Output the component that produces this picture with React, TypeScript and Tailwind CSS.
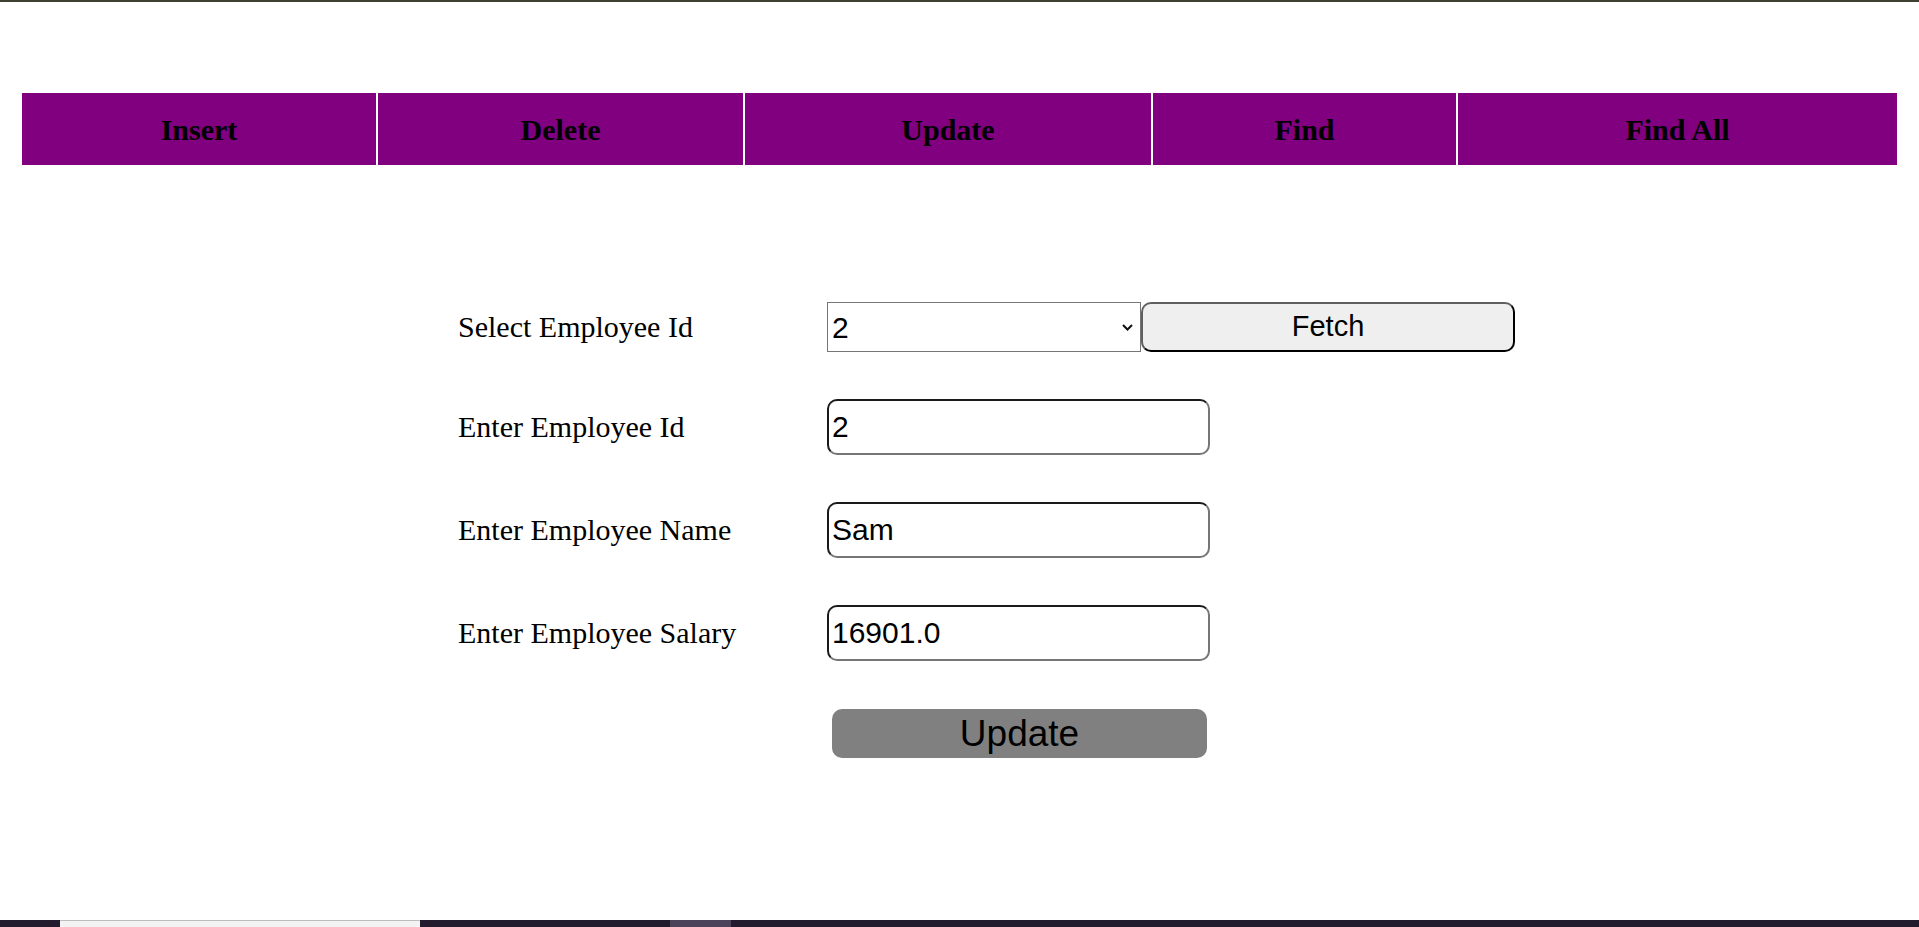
import React from "react";

const tabs = [
  { label: "Insert", width: "w-[354px]" },
  { label: "Delete", width: "w-[365px]" },
  { label: "Update", width: "w-[406px]" },
  { label: "Find", width: "w-[303px]" },
  { label: "Find All", width: "flex-1" },
];

const inputClass =
  "h-[56px] w-[383px] rounded-[10px] border-2 border-t-[#1a1a1a] border-l-[#1a1a1a] border-b-[#767676] border-r-[#767676] bg-white pl-[3px] text-[30px] text-black outline-none [font-family:'Liberation_Sans',Arial,sans-serif]";

function Label({ children }: { children: React.ReactNode }) {
  return (
    <div className="w-[369px] shrink-0 text-[30px] leading-none text-black [font-family:'Liberation_Serif','Times_New_Roman',serif]">
      {children}
    </div>
  );
}

export default function App() {
  return (
    <div className="flex h-screen w-full flex-col bg-white">
      <div className="h-[2px] w-full bg-[#3c4130]" />

      <nav className="mx-[22px] mt-[91px] flex h-[72px] gap-[2px]">
        {tabs.map((t) => (
          <div
            key={t.label}
            className={`${t.width} flex items-center justify-center bg-[#800080] text-[30px] font-bold text-black [font-family:'Liberation_Serif','Times_New_Roman',serif]`}
          >
            {t.label}
          </div>
        ))}
      </nav>

      <form
        className="ml-[458px] mt-[137px] flex flex-col"
        onSubmit={(e) => e.preventDefault()}
      >
        <div className="flex h-[50px] items-center">
          <Label>Select Employee Id</Label>
          <div className="relative h-[50px] w-[314px]">
            <select
              defaultValue="2"
              className="h-full w-full appearance-none border border-[#767676] bg-white pl-[4px] text-[30px] text-black outline-none [font-family:'Liberation_Sans',Arial,sans-serif]"
            >
              <option value="1">1</option>
              <option value="2">2</option>
              <option value="3">3</option>
            </select>
            <svg
              className="pointer-events-none absolute right-[8px] top-[22px]"
              width="11"
              height="7"
              viewBox="0 0 11 7"
            >
              <path
                d="M1 1l4.5 4.5L10 1"
                fill="none"
                stroke="#111"
                strokeWidth="2"
              />
            </svg>
          </div>
          <button
            type="button"
            className="h-[50px] w-[374px] rounded-[10px] border-2 border-t-[#5f5f5f] border-l-[#5f5f5f] border-b-black border-r-black bg-[#efefef] text-[29px] text-black [font-family:'Liberation_Sans',Arial,sans-serif]"
          >
            Fetch
          </button>
        </div>

        <div className="mt-[47px] flex items-center">
          <Label>Enter Employee Id</Label>
          <input className={inputClass} defaultValue="2" />
        </div>

        <div className="mt-[47px] flex items-center">
          <Label>Enter Employee Name</Label>
          <input className={inputClass} defaultValue="Sam" />
        </div>

        <div className="mt-[47px] flex items-center">
          <Label>Enter Employee Salary</Label>
          <input className={inputClass} defaultValue="16901.0" />
        </div>

        <div className="mt-[48px] flex">
          <div className="w-[374px] shrink-0" />
          <button
            type="submit"
            className="h-[49px] w-[375px] rounded-[10px] bg-[#808080] text-[37px] leading-none text-black [font-family:'Liberation_Sans',Arial,sans-serif]"
          >
            Update
          </button>
        </div>
      </form>

      <div className="flex-1" />

      <div className="flex h-[7px] w-full bg-[#221b2e]">
        <div className="ml-[60px] h-full w-[360px] border-t border-[#bdbdbd] bg-[#f3f3f3]" />
        <div className="ml-[250px] h-full w-[61px] bg-[#4b4359]" />
      </div>
    </div>
  );
}
